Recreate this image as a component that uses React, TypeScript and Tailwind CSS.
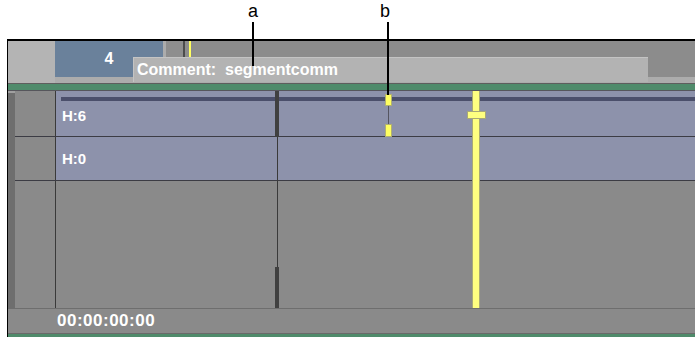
import React from "react";

// ─── Timeline overlay pieces ─────────────────────────────────────────────────

function Playhead() {
  return (
    <div className="absolute left-[472px] top-[91px] h-[217px] w-[8px] bg-[#ffff80] border-x border-[#a8a878]">
      <div className="absolute left-[-6px] top-[20px] h-[8px] w-[19px] bg-[#ffff80] border border-[#a8a878]" />
    </div>
  );
}

function Marker() {
  return (
    <div className="absolute left-[385px] top-[94px] flex h-[43px] w-[7px] flex-col items-center">
      <div className="h-[12px] w-[7px] bg-[#ffff60] border border-[#b0b070]" />
      <div className="w-px flex-1 bg-[#555560]" />
      <div className="h-[13px] w-[7px] bg-[#ffff60] border border-[#b0b070]" />
    </div>
  );
}

export default function App() {
  const label = "text-white font-bold";
  return (
    <div className="relative h-[337px] w-[695px] overflow-hidden bg-white font-['Liberation_Sans',Arial,sans-serif]">
      <div className="h-[39px]" />

      <div className="ml-[7px] flex flex-col border-l border-t-2 border-black">
        {/* header */}
        <div className="flex h-[42px]">
          <div className="w-[47px] bg-[#b4b4b4]" />
          <div className="flex flex-1 flex-col">
            <div className="flex h-[36px]">
              <div className={`flex w-[108px] justify-center bg-[#6a819b] pt-[9px] text-[16px] leading-[18px] ${label}`}>
                4
              </div>
              <div className="w-[3px] bg-[#acacac]" />
              <div className="w-[17px] bg-[#8e8e8e]" />
              <div className="w-[2px] bg-[#4c4c4c]" />
              <div className="w-[4px] bg-[#8c8c8c]" />
              <div className="h-[16px] w-[2px] bg-[#ffff60]" />
              <div className="flex-1 bg-[#8c8c8c]" />
            </div>
            <div className="flex-1 bg-[#acacac]" />
          </div>
        </div>
        <div className="h-px bg-[#5e5e5e]" />
        <div className="h-[6px] bg-[#4f8b6b]" />
        <div className="h-px bg-[#56565c]" />

        {/* tracks */}
        <div className="flex h-[217px]">
          <div className="flex w-[7px] flex-col bg-[#6e6e6e]">
            <div className="h-[2px] bg-[#a0a0a0]" />
          </div>
          <div className="flex flex-1 flex-col">
            <div className="flex h-[46px] border-b border-[#3c3c44]">
              <div className="w-[40px] bg-[#8a8a8a]" />
              <div className="w-px bg-[#3a3a3a]" />
              <div className="flex flex-1 flex-col bg-[#8d92ab]">
                <div className="ml-[5px] mt-[6px] h-[4px] bg-[#4b4f6b]" />
                <div className={`ml-[6px] mt-[6px] text-[15px] leading-[17px] ${label}`}>H:6</div>
              </div>
            </div>
            <div className="flex h-[44px] border-b border-[#3c3c44]">
              <div className="w-[40px] bg-[#8a8a8a]" />
              <div className="w-px bg-[#3a3a3a]" />
              <div className="flex flex-1 items-center bg-[#8d92ab]">
                <div className={`ml-[6px] text-[15px] leading-[17px] ${label}`}>H:0</div>
              </div>
            </div>
            <div className="flex flex-1">
              <div className="w-[40px] bg-[#8a8a8a]" />
              <div className="w-px bg-[#3a3a3a]" />
              <div className="flex-1 bg-[#8a8a8a]" />
            </div>
          </div>
        </div>

        {/* bottom bar */}
        <div className="h-px bg-[#6e6e6e]" />
        <div className="flex h-[24px] items-center bg-[#8a8a8a]">
          <div className={`ml-[49px] text-[17px] tracking-[0.5px] ${label}`}>00:00:00:00</div>
        </div>
        <div className="h-px bg-[#6a6a6a]" />
        <div className="h-[3px] bg-[#4f8b6b]" />
      </div>

      {/* edit point */}
      <div className="absolute left-[275px] top-[91px] h-[46px] w-[4px] bg-[#404040]" />
      <div className="absolute left-[277px] top-[137px] h-[171px] w-px bg-[#3a3a3a]" />
      <div className="absolute left-[275px] top-[267px] h-[41px] w-[4px] bg-[#404040]" />

      <Marker />
      <Playhead />

      {/* comment tooltip */}
      <div className={`absolute left-[133px] top-[57px] flex h-[25px] w-[515px] items-center border-l border-t border-[#c4c4c4] bg-[#b3b3b3] pl-[3px] text-[16px] ${label}`}>
        Comment:&nbsp;&nbsp;segmentcomm
      </div>

      {/* callouts */}
      <div className="absolute left-[248px] top-[1px] text-[18px] leading-[20px] text-black">a</div>
      <div className="absolute left-[252px] top-[22px] h-[44px] w-[2px] bg-black" />
      <div className="absolute left-[380px] top-[1px] text-[18px] leading-[20px] text-black">b</div>
      <div className="absolute left-[387px] top-[22px] h-[73px] w-[2px] bg-black" />
    </div>
  );
}
